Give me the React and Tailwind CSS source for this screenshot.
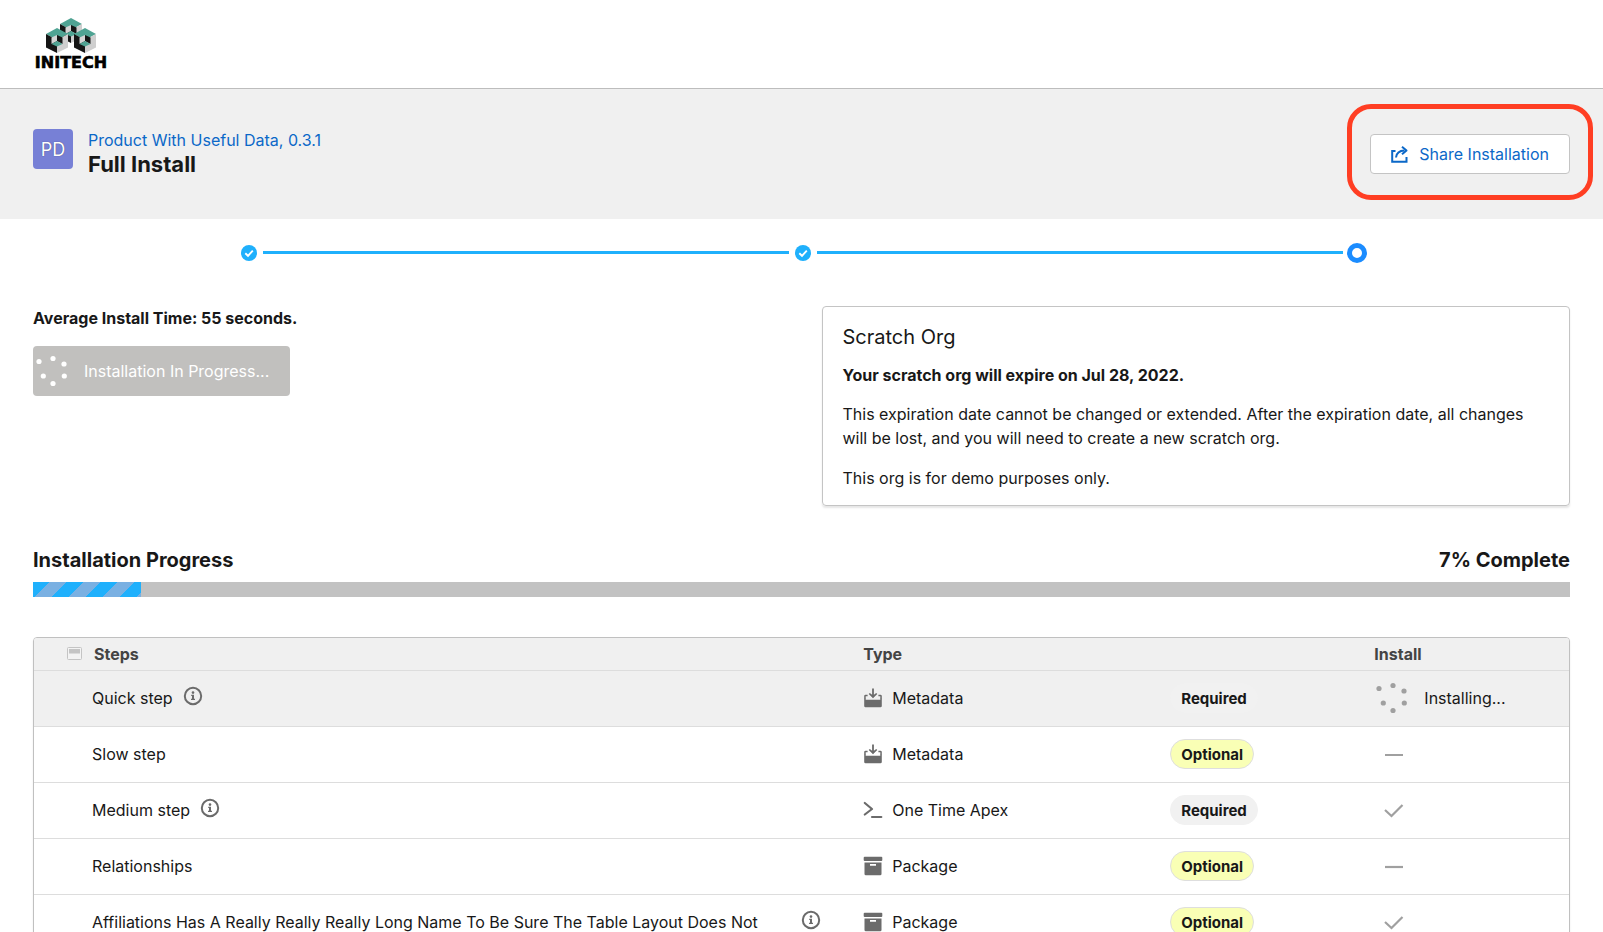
const STEPS = [
  { name: 'Quick step', info: true, type: 'Metadata', required: true, status: 'installing' },
  { name: 'Slow step', type: 'Metadata', status: 'skipped' },
  { name: 'Medium step', info: true, type: 'One Time Apex', required: true, status: 'selected' },
  { name: 'Relationships', type: 'Package', status: 'skipped' },
  {
    name: 'Affiliations Has A Really Really Really Long Name To Be Sure The Table Layout Does Not',
    info: true,
    long: true,
    type: 'Package',
    status: 'selected',
  },
];

const PERCENT = 7;

function Cube({ x, y }) {
  return (
    <g transform={`translate(${x} ${y})`}>
      <path d="M0 6 11 0 22 6 11 12Z" fill="#4fa393" />
      <path d="M0 6 11 12V25L0 19.500Z" fill="#151515" />
      <path d="M22 6 11 12V25L22 19.500Z" fill="#cfcfcf" />
      <path d="M5.500 9.500 11 7V13L5.500 16Z" fill="#d5d5d5" />
      <path d="M16.500 9.500 11 7V13L16.500 16Z" fill="#151515" />
      <path d="M5.500 16 11 13 16.500 16 11 18.500Z" fill="#4fa393" />
    </g>
  );
}

function Logo() {
  return (
    <a href="#home" aria-label="Initech" className="block">
      <svg width="80" height="56" viewBox="0 0 80 56" role="img" aria-label="Initech">
        <Cube x={28} y={0} />
        <Cube x={14} y={10} />
        <Cube x={42} y={10} />
        <text
          x="39"
          y="50"
          textAnchor="middle"
          fontFamily="DejaVu Sans, sans-serif"
          fontWeight="700"
          fontSize="16"
          fill="#000"
          stroke="#000"
          strokeWidth="0.600"
        >
          INITECH
        </text>
      </svg>
    </a>
  );
}

function ShareIcon() {
  return (
    <svg width="17" height="17" viewBox="0 0 17 17" fill="none" stroke="#0b68c8" strokeWidth="2" aria-hidden="true">
      <path d="M4.500 5H1.200V15.800H15.500V11" />
      <path d="M5 11.500C5.400 7.500 8 4.700 13.500 4.500" />
      <path d="M11 0.800 15.500 4.500 11 8.300" strokeLinejoin="round" />
    </svg>
  );
}

function Spinner({ className }) {
  return (
    <svg width="32" height="34" viewBox="0 -1 32 34" fill="currentColor" className={className} aria-hidden="true">
      <circle cx="3" cy="6.500" r="2.600" />
      <circle cx="17" cy="3.500" r="2.600" />
      <circle cx="28" cy="9" r="2.600" />
      <circle cx="28.300" cy="21" r="2.600" />
      <circle cx="17" cy="28.500" r="2.600" />
      <circle cx="7.300" cy="21" r="2.600" />
    </svg>
  );
}

function InfoIcon() {
  return (
    <svg width="20" height="20" viewBox="0 0 20 20" aria-hidden="true">
      <circle cx="10" cy="10" r="8.200" fill="none" stroke="#6b6b6b" strokeWidth="2" />
      <circle cx="10" cy="6.600" r="1.300" fill="#6b6b6b" />
      <path d="M8.200 8.800H11V12.800H12V14H8V12.800H9V10H8.200Z" fill="#6b6b6b" />
    </svg>
  );
}

function TypeIcon({ type }) {
  if (type === 'Metadata') {
    return (
      <svg width="20" height="20" viewBox="0 0 20 20" fill="#6b6b6b" aria-hidden="true">
        <path d="M9.100 0.500H10.900V6.700L13.200 4.900 14.300 6.100 10 10.200 5.700 6.100 6.800 4.900 9.100 6.700Z" />
        <path d="M2.600 6.800H4.600V8.200H2.700V10.200H1.200V8.100Q1.200 6.800 2.600 6.800Z" />
        <path d="M17.400 6.800H15.400V8.200H17.300V10.200H18.800V8.100Q18.800 6.800 17.400 6.800Z" />
        <path d="M1.200 10H2.700V11.700H17.300V10H18.800V17.900Q18.800 19.300 17.400 19.300H2.600Q1.200 19.300 1.200 17.900Z" />
      </svg>
    );
  }
  if (type === 'Package') {
    return (
      <svg width="20" height="20" viewBox="0 0 20 20" fill="#6b6b6b" aria-hidden="true">
        <rect x="0.700" y="0.700" width="18.600" height="4.300" rx="1" />
        <path
          fillRule="evenodd"
          d="M1.500 6.600H18.500V17.900Q18.500 19.300 17.100 19.300H2.900Q1.500 19.300 1.500 17.900ZM7 8V9.700H13V8Z"
        />
      </svg>
    );
  }
  return (
    <svg width="20" height="20" viewBox="0 0 20 20" fill="none" stroke="#6b6b6b" strokeWidth="2.200" strokeLinecap="round" aria-hidden="true">
      <path d="M1.800 3 9 9 1.800 14.500" strokeLinejoin="round" />
      <path d="M9 17H18.300" />
    </svg>
  );
}

function TableIcon() {
  return (
    <svg width="15" height="13" viewBox="0 0 15 13" aria-hidden="true">
      <rect x="0.500" y="0.500" width="14" height="12" rx="1" fill="#f3f3f3" stroke="#c4c4c4" />
      <rect x="2" y="2" width="11" height="4.500" fill="#c4c4c4" />
    </svg>
  );
}

function DoneMark() {
  return (
    <svg width="16" height="16" viewBox="0 0 16 16" className="shrink-0" aria-label="Completed">
      <circle cx="8" cy="8" r="8" fill="#1fb0fc" />
      <path d="M4.300 8.300 7 10.800 11.800 5.600" fill="none" stroke="#fff" strokeWidth="1.900" />
    </svg>
  );
}

function Status({ status }) {
  if (status === 'installing') {
    return (
      <div className="flex items-center gap-4 pl-0.5">
        <Spinner className="text-[#a0a0a0]" />
        <span>Installing...</span>
      </div>
    );
  }
  return (
    <svg width="20" height="20" viewBox="0 0 20 20" fill="none" stroke="#a0a0a0" strokeWidth="2.200" className="ml-2.5" aria-hidden="true">
      {status === 'skipped' ? <path d="M1 11H19" /> : <path d="M1 10 7.500 16 18.500 5" />}
    </svg>
  );
}

function Badge({ required }) {
  return required ? (
    <span className="inline-flex h-[30px] items-center rounded-full border border-[#f1f1f1] bg-[#f1f1f1] px-2.5 pt-0.5 text-[15px] font-bold">
      Required
    </span>
  ) : (
    <span className="inline-flex h-[30px] items-center rounded-full border border-[#dedede] bg-[#f9ffb5] px-2.5 pt-0.5 text-[15px] font-bold">
      Optional
    </span>
  );
}

export default function App() {
  return (
    <div className="h-screen overflow-y-auto bg-white font-['Inter',sans-serif] text-base text-[#181818] [scrollbar-width:none]">
      <header className="border-b border-[#bdbdbd] px-8 pt-[18px] pb-3.5">
        <Logo />
      </header>

      <section className="flex items-center justify-between bg-[#f0f0f0] px-[33px] py-10">
        <div className="flex items-start gap-[15px]">
          <div className="flex size-10 items-center justify-center rounded bg-[#7780d6] pt-0.5 text-lg text-white [text-shadow:0_0_1px_#0008]">
            PD
          </div>
          <div className="flex flex-col">
            <a href="#product" className="leading-[23px] text-[#0b68c8]">
              Product With Useful Data, 0.3.1
            </a>
            <h1 className="pb-0.5 text-[22px] leading-[25px] font-bold">Full Install</h1>
          </div>
        </div>
        <div className="relative">
          <button
            type="button"
            className="flex h-10 items-center gap-[11px] rounded border border-[#c4c4c4] bg-white px-5 text-[#0b68c8]"
          >
            <ShareIcon />
            Share Installation
          </button>
          <div className="pointer-events-none absolute -inset-x-[23px] -top-[30px] -bottom-[26px] rounded-3xl border-[5px] border-[#ff3e23]" />
        </div>
      </section>

      <main className="px-[33px]">
        <div className="mx-auto flex h-[67px] w-3/4 items-center gap-1.5 pr-[13px] pl-4">
          <DoneMark />
          <span className="h-[3px] flex-1 bg-[#1fb0fc]" />
          <DoneMark />
          <span className="h-[3px] flex-1 bg-[#1fb0fc]" />
          <span className="-mx-0.5 size-5 shrink-0 rounded-full border-[5px] border-[#1b8cff]" />
        </div>

        <div className="mt-5 grid grid-cols-2 gap-10">
          <div>
            <p className="leading-6 font-bold">Average Install Time: 55 seconds.</p>
            <button
              type="button"
              disabled
              className="mt-4 flex h-[50px] items-center gap-4 rounded bg-[#c1c0be] pr-[21px] pl-[3px] text-white"
            >
              <Spinner />
              Installation In Progress...
            </button>
          </div>
          <article className="rounded border border-[#c4c4c4] px-5 pt-[17px] pb-[15px] shadow-[0_2px_2px_#0000001a]">
            <h2 className="text-xl leading-[26px]">Scratch Org</h2>
            <p className="mt-[13px] leading-6 font-bold">Your scratch org will expire on Jul 28, 2022.</p>
            <p className="mt-[15px] leading-6">
              This expiration date cannot be changed or extended. After the expiration date, all changes will be lost,
              and you will need to create a new scratch org.
            </p>
            <p className="mt-4 leading-6">This org is for demo purposes only.</p>
          </article>
        </div>

        <div className="mt-10 flex items-center justify-between text-xl leading-7 font-bold">
          <h2>Installation Progress</h2>
          <span>{PERCENT}% Complete</span>
        </div>
        <div
          role="progressbar"
          aria-label="Installation Progress"
          aria-valuenow={PERCENT}
          aria-valuemin={0}
          aria-valuemax={100}
          className="mt-2 h-[15px] bg-[#c2c2c2]"
        >
          <div
            className="h-full bg-[#1fb0fc] bg-[repeating-linear-gradient(135deg,#1fb0fc_0_12px,#7ab0e2_12px_24px)]"
            style={{ width: `${PERCENT}%` }}
          />
        </div>

        <div className="mt-10 overflow-hidden rounded border border-[#c0c0c0] shadow-[0_2px_2px_#0000001a]">
          <table className="w-full table-fixed text-left">
            <colgroup>
              <col className="w-[53.5%]" />
              <col className="w-[20%]" />
              <col className="w-[13.3%]" />
              <col />
            </colgroup>
            <thead>
              <tr className="h-8 border-b border-[#dddddd] bg-[#f0f0f0] text-[#444444]">
                <th scope="col" className="pl-[33px] font-bold">
                  <span className="flex items-center gap-3">
                    <TableIcon />
                    Steps
                  </span>
                </th>
                <th scope="col" className="px-2 font-bold">Type</th>
                <th scope="col" aria-label="Requirement" />
                <th scope="col" className="px-2 font-bold">Install</th>
              </tr>
            </thead>
            <tbody>
              {STEPS.map((step) => (
                <tr
                  key={step.name}
                  className={
                    step.status === 'installing'
                      ? 'h-14 border-b border-[#dddddd] bg-[#f0f0f0]'
                      : 'h-14 border-b border-[#dddddd]'
                  }
                >
                  <td className="pr-[34px] pl-[58px]">
                    <div className="flex items-center gap-2.5">
                      <span className={step.long ? 'flex-1' : ''}>{step.name}</span>
                      {step.info && (
                        <button type="button" aria-label={`About ${step.name}`} className="shrink-0 pb-1">
                          <InfoIcon />
                        </button>
                      )}
                    </div>
                  </td>
                  <td className="px-2">
                    <span className="flex items-center gap-[9px]">
                      <TypeIcon type={step.type} />
                      {step.type}
                    </span>
                  </td>
                  <td className="px-2">
                    <div className="flex">
                      <Badge required={step.required} />
                    </div>
                  </td>
                  <td className="px-2">
                    <Status status={step.status} />
                  </td>
                </tr>
              ))}
            </tbody>
          </table>
        </div>
      </main>
    </div>
  );
}
